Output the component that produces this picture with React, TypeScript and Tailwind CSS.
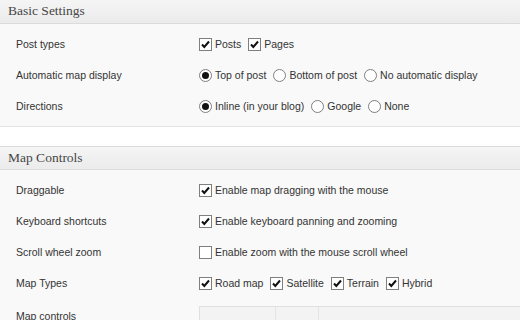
import type { ReactNode } from 'react';

function Check({ on }: { on: boolean }) {
  return (
    <span className="inline-flex h-[13px] w-[13px] shrink-0 items-center justify-center border border-[#7f7f7f] bg-white">
      {on && (
        <svg viewBox="0 0 11 11" className="h-[11px] w-[11px]">
          <path d="M2 5.5 L4.3 8 L9 2.5" fill="none" stroke="#111" strokeWidth="2" />
        </svg>
      )}
    </span>
  );
}

function Radio({ on }: { on: boolean }) {
  return (
    <span className="inline-flex h-[13px] w-[13px] shrink-0 items-center justify-center rounded-full border border-[#7f7f7f] bg-white">
      {on && <span className="h-[7px] w-[7px] rounded-full bg-[#111]" />}
    </span>
  );
}

function Opt({ kind, on, label }: { kind: 'check' | 'radio'; on: boolean; label: string }) {
  return (
    <span className="flex items-center gap-[3px]">
      {kind === 'check' ? <Check on={on} /> : <Radio on={on} />}
      <span>{label}</span>
    </span>
  );
}

function Row({ label, children }: { label: string; children: ReactNode }) {
  return (
    <div className="flex h-[31px] items-center">
      <div className="w-[199px] shrink-0 pl-4">{label}</div>
      <div className="flex items-center gap-[7px]">{children}</div>
    </div>
  );
}

function Header({ title, top }: { title: string; top?: boolean }) {
  return (
    <div
      className={`flex h-[24px] items-center border-b border-[#dcdcdc] bg-gradient-to-b from-[#f5f5f5] to-[#ebebeb] pl-2 font-['Liberation_Serif',serif] text-[13.5px] text-[#464646] ${
        top ? 'border-t' : ''
      }`}
    >
      {title}
    </div>
  );
}

export default function App() {
  return (
    <div className="h-[320px] w-[520px] overflow-hidden bg-white font-['Liberation_Sans',Arial,sans-serif] text-[10.5px] text-[#333]">
      {/* Basic settings */}
      <div className="border-b border-[#e3e3e3] bg-[#f9f9f9]">
        <Header title="Basic Settings" />
        <div className="pt-[5px] pb-[4px]">
          <Row label="Post types">
            <Opt kind="check" on label="Posts" />
            <Opt kind="check" on label="Pages" />
          </Row>
          <Row label="Automatic map display">
            <Opt kind="radio" on label="Top of post" />
            <Opt kind="radio" on={false} label="Bottom of post" />
            <Opt kind="radio" on={false} label="No automatic display" />
          </Row>
          <Row label="Directions">
            <Opt kind="radio" on label="Inline (in your blog)" />
            <Opt kind="radio" on={false} label="Google" />
            <Opt kind="radio" on={false} label="None" />
          </Row>
        </div>
      </div>

      <div className="h-[19px]" />

      {/* Map controls */}
      <div className="bg-[#f9f9f9]">
        <Header title="Map Controls" top />
        <div className="pt-[5px]">
          <Row label="Draggable">
            <Opt kind="check" on label="Enable map dragging with the mouse" />
          </Row>
          <Row label="Keyboard shortcuts">
            <Opt kind="check" on label="Enable keyboard panning and zooming" />
          </Row>
          <Row label="Scroll wheel zoom">
            <Opt kind="check" on={false} label="Enable zoom with the mouse scroll wheel" />
          </Row>
          <Row label="Map Types">
            <Opt kind="check" on label="Road map" />
            <Opt kind="check" on label="Satellite" />
            <Opt kind="check" on label="Terrain" />
            <Opt kind="check" on label="Hybrid" />
          </Row>
          <div className="flex h-[31px]">
            <div className="w-[199px] shrink-0 pl-4 pt-[10px]">Map controls</div>
            <div className="mt-[7px] flex h-[24px] flex-1 border-t border-l border-[#e0e0e0] bg-[#f3f3f3]">
              <div className="w-[76px] border-r border-[#e4e4e4]" />
              <div className="w-[43px] border-r border-[#e4e4e4]" />
              <div className="flex-1" />
            </div>
          </div>
        </div>
      </div>
    </div>
  );
}
